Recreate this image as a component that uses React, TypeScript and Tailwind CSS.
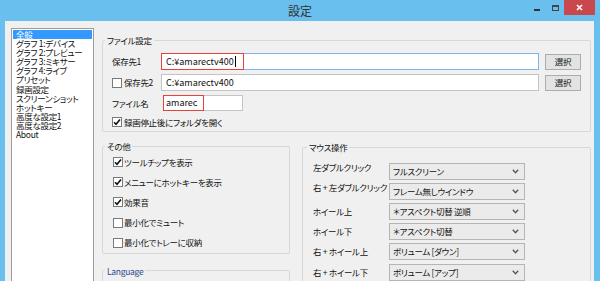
import React from "react";

const listItems = [
  "全般",
  "グラフ 1:デバイス",
  "グラフ 2:プレビュー",
  "グラフ 3:ミキサー",
  "グラフ 4:ライブ",
  "プリセット",
  "録画設定",
  "スクリーンショット",
  "ホットキー",
  "高度な設定1",
  "高度な設定2",
  "About",
];

const otherOptions = [
  { label: "ツールチップを表示", checked: true },
  { label: "メニューにホットキーを表示", checked: true },
  { label: "効果音", checked: true },
  { label: "最小化でミュート", checked: false },
  { label: "最小化でトレーに収納", checked: false },
];

const mouseRows = [
  { label: "左ダブルクリック", value: "フルスクリーン", raise: true },
  { label: "右 + 左ダブルクリック", value: "フレーム無しウインドウ", raise: true },
  { label: "ホイール上", value: "＊アスペクト切替 逆順", raise: false },
  { label: "ホイール下", value: "＊アスペクト切替", raise: false },
  { label: "右 + ホイール上", value: "ボリューム [ダウン]", raise: false },
  { label: "右 + ホイール下", value: "ボリューム [アップ]", raise: false },
];

function CheckBox({ checked }: { checked: boolean }) {
  return (
    <span className="w-[10px] h-[10px] shrink-0 border border-[#7a7a7a] bg-white flex items-center justify-center">
      {checked && (
        <svg width="8" height="8" viewBox="0 0 8 8">
          <path d="M1 4.2 L3 6.2 L7 1.5" fill="none" stroke="#111" strokeWidth="1.6" />
        </svg>
      )}
    </span>
  );
}

function Combo({ value }: { value: string }) {
  return (
    <div className="w-[136px] h-[17px] border border-[#b5b5b5] bg-[#ebebeb] flex items-center pl-[3px] pr-[5px]">
      <span className="flex-1 truncate">{value}</span>
      <svg width="7" height="5" viewBox="0 0 7 5">
        <path d="M0.8 0.8 L3.5 3.8 L6.2 0.8" fill="none" stroke="#555" strokeWidth="1.3" />
      </svg>
    </div>
  );
}

function SelectButton() {
  return (
    <button className="w-[36px] h-[16px] border border-[#adadad] bg-[#e3e3e3] leading-none">
      選択
    </button>
  );
}

export default function App() {
  return (
    <div className="w-[600px] h-[281px] overflow-hidden bg-[#69c0ee] flex flex-col text-[8.5px] tracking-[-0.3px] text-[#111] font-['Noto_Sans_CJK_JP',sans-serif] [font-feature-settings:'palt']">
      {/* title bar */}
      <div className="h-[21px] shrink-0 grid grid-cols-[1fr_auto_1fr]">
        <div />
        <div className="text-[12px] tracking-normal text-[#333] leading-[21px]">設定</div>
        <div className="flex justify-end items-start pr-[5px]">
          <div className="w-[18px] h-[15px] flex items-center justify-center pt-[5px]">
            <span className="w-[6px] h-[2px] bg-[#333]" />
          </div>
          <div className="w-[18px] h-[15px] flex items-center justify-center">
            <span className="w-[7px] h-[6px] border border-[#444] border-t-2" />
          </div>
          <div className="w-[31px] h-[15px] bg-[#c9484c] flex items-center justify-center">
            <svg width="7" height="7" viewBox="0 0 7 7">
              <path d="M1 1 L6 6 M6 1 L1 6" stroke="#fff" strokeWidth="1.6" />
            </svg>
          </div>
        </div>
      </div>

      {/* client area */}
      <div className="flex-1 ml-[5px] mr-[6px] bg-[#f0f0f0] flex gap-[8px] pl-[6px] pt-[7px]">
        {/* settings list */}
        <div className="w-[83px] shrink-0 bg-white border border-[#9c9c9c] border-b-0 p-[1px]">
          {listItems.map((item, i) => (
            <div
              key={item}
              className={`h-[9.1px] leading-[9.1px] pl-[3px] whitespace-nowrap ${
                i === 0 ? "bg-[#3399ff] text-white" : ""
              }`}
            >
              {item}
            </div>
          ))}
        </div>

        {/* main panel */}
        <div className="flex-1 flex flex-col pt-[6px] pr-[3px]">
          <fieldset className="border border-[#d8d8d8] rounded-[2px] px-[9px] pb-[3px]">
            <legend className="ml-[-7px] px-[2px] leading-[12px]">ファイル設定</legend>
            <div className="flex flex-col gap-[4px] mt-[7px]">
              <div className="flex items-center h-[17px]">
                <span className="w-[49px]">保存先1</span>
                <div className="relative flex-1 h-[17px] border border-[#7eb4ea] bg-white flex items-center pl-[4px] text-[9px] tracking-normal">
                  <span>C:¥amarectv400</span>
                  <span className="w-px h-[11px] bg-black ml-[1px]" />
                  <span className="absolute -left-px -top-px w-[83px] h-[17px] border-[1.5px] border-[#e8413c]" />
                </div>
                <div className="ml-[6px]">
                  <SelectButton />
                </div>
              </div>
              <div className="flex items-center h-[17px]">
                <div className="w-[49px] flex items-center gap-[2px]">
                  <CheckBox checked={false} />
                  <span>保存先2</span>
                </div>
                <div className="flex-1 h-[17px] border border-[#c4c4c4] bg-white flex items-center pl-[4px] text-[9px] tracking-normal">
                  C:¥amarectv400
                </div>
                <div className="ml-[6px]">
                  <SelectButton />
                </div>
              </div>
              <div className="flex items-center h-[16px]">
                <span className="w-[51px]">ファイル名</span>
                <div className="relative w-[80px] h-[16px] border border-[#c4c4c4] bg-white flex items-center pl-[2px] text-[9px] tracking-normal">
                  amarec
                  <span className="absolute -left-px -top-px w-[41px] h-[16px] border-[1.5px] border-[#e8413c]" />
                </div>
              </div>
              <div className="flex items-center gap-[2px] h-[12px] mt-[1px]">
                <CheckBox checked />
                <span>録画停止後にフォルダを開く</span>
              </div>
            </div>
          </fieldset>

          <div className="flex gap-[12px] mt-[8px]">
            <div className="w-[188px] flex flex-col">
              <fieldset className="border border-[#d8d8d8] rounded-[2px] px-[10px]">
                <legend className="ml-[-8px] px-[2px] leading-[12px]">その他</legend>
                {otherOptions.map((o) => (
                  <div key={o.label} className="h-[20.2px] flex items-center gap-[1px]">
                    <CheckBox checked={o.checked} />
                    <span>{o.label}</span>
                  </div>
                ))}
              </fieldset>
              <fieldset className="mt-[11px] h-[40px] border border-[#d8d8d8] rounded-[2px] px-[11px]">
                <legend className="ml-[-9px] px-[2px] leading-[12px] text-[#2a4a8c]">Language</legend>
              </fieldset>
            </div>

            <fieldset className="flex-1 h-[160px] mt-[1px] border border-[#d8d8d8] rounded-[2px] px-[10px]">
              <legend className="ml-[-6px] px-[2px] leading-[12px]">マウス操作</legend>
              <div className="flex flex-col mt-[8px]">
                {mouseRows.map((r) => (
                  <div key={r.label} className="h-[20.2px] flex items-center">
                    <span className={`w-[76px] whitespace-nowrap ${r.raise ? "mb-[7px]" : ""}`}>
                      {r.label}
                    </span>
                    <Combo value={r.value} />
                  </div>
                ))}
              </div>
            </fieldset>
          </div>
        </div>
      </div>
    </div>
  );
}
